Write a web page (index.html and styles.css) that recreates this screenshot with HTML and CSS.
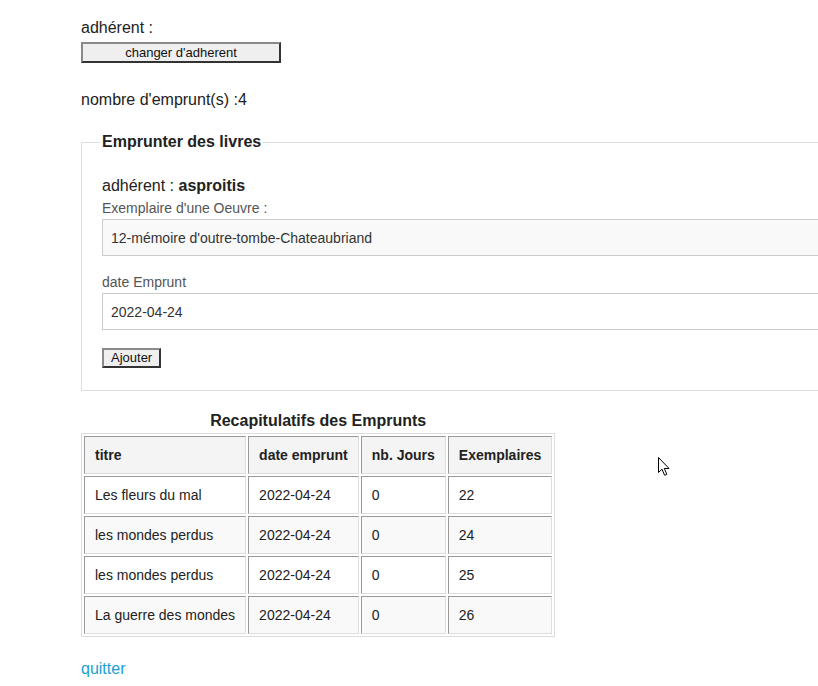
FILE: index.html
```html
<!DOCTYPE html>
<html lang="fr">
<head>
<meta charset="utf-8">
<title>Emprunts</title>
<link rel="stylesheet" href="styles.css">
</head>
<body>
<div class="page">
  <p class="line first">adhérent :</p>
  <button class="btn btn-wide" type="button">changer d'adherent</button>
  <p class="line count">nombre d'emprunt(s) :4</p>

  <form class="borrow">
    <fieldset class="box">
      <legend class="box-title">Emprunter des livres</legend>
      <p class="line member">adhérent : <strong>asproitis</strong></p>
      <label class="field-label" for="ex">Exemplaire d'une Oeuvre :</label>
      <div class="field field-grey" id="ex">12-mémoire d'outre-tombe-Chateaubriand</div>
      <label class="field-label gap" for="dt">date Emprunt</label>
      <div class="field" id="dt">2022-04-24</div>
      <button class="btn btn-small" type="button">Ajouter</button>
    </fieldset>
  </form>

  <table class="recap">
    <caption class="recap-title">Recapitulatifs des Emprunts</caption>
    <thead>
      <tr><th>titre</th><th>date emprunt</th><th>nb. Jours</th><th>Exemplaires</th></tr>
    </thead>
    <tbody>
      <tr><td>Les fleurs du mal</td><td>2022-04-24</td><td>0</td><td>22</td></tr>
      <tr class="alt"><td>les mondes perdus</td><td>2022-04-24</td><td>0</td><td>24</td></tr>
      <tr><td>les mondes perdus</td><td>2022-04-24</td><td>0</td><td>25</td></tr>
      <tr class="alt"><td>La guerre des mondes</td><td>2022-04-24</td><td>0</td><td>26</td></tr>
    </tbody>
  </table>

  <a class="quit" href="#">quitter</a>

  <svg class="cursor" width="12" height="20" viewBox="0 0 12 20" aria-hidden="true">
    <path d="M0.5 0.5 L0.5 15.5 L4 12.2 L6.6 18.3 L8.8 17.3 L6.3 11.5 L11 11.5 Z" fill="#fff" stroke="#000" stroke-width="1" stroke-linejoin="miter"/>
  </svg>
</div>
</body>
</html>
```
FILE: styles.css
```css
html, body {
  margin: 0;
  padding: 0;
  background: #fff;
}
body {
  font-family: "Liberation Sans", Arial, sans-serif;
  color: #222;
  overflow: hidden;
}
.page {
  position: relative;
  box-sizing: border-box;
  padding-left: 81px;
  width: 818px;
  height: 686px;
  overflow: hidden;
}
.line {
  margin: 0;
  font-size: 16px;
  line-height: 18px;
}
.first {
  padding-top: 19px;
}
.btn {
  display: block;
  margin: 0;
  font-family: "Liberation Sans", Arial, sans-serif;
  font-size: 13px;
  color: #111;
  background: #efefef;
  border-style: solid;
  border-width: 2px;
  border-color: #8a8a8a #333 #333 #8a8a8a;
  border-radius: 0;
  padding: 0;
}
.btn-wide {
  width: 200px;
  height: 21px;
  margin-top: 5px;
  line-height: 17px;
}
.btn-small {
  height: 20px;
  padding: 0 7px;
  line-height: 16px;
  margin-top: 18px;
}
.count {
  margin-top: 28px;
}
.borrow {
  margin: 24px 0 0 0;
}
.box {
  margin: 0;
  width: 900px;
  border: 1px solid #ddd;
  padding: 26px 20px 22px 20px;
  box-sizing: border-box;
}
.box-title {
  font-size: 16px;
  line-height: 18px;
  font-weight: bold;
  padding: 0 2px;
  margin-left: -2px;
}
.member strong {
  font-weight: bold;
}
.field-label {
  display: block;
  font-size: 14px;
  line-height: 16px;
  color: #555;
  margin-top: 5px;
}
.field-label.gap {
  margin-top: 18px;
}
.field {
  margin-top: 3px;
  height: 37px;
  box-sizing: border-box;
  border: 1px solid #ccc;
  background: #fff;
  padding: 1px 8px 0 8px;
  font-size: 14px;
  line-height: 35px;
  color: #333;
}
.field-grey {
  background: #f9f9f9;
}
.recap {
  margin-top: 21px;
  border: 1px solid #ddd;
  border-spacing: 2px;
  font-size: 14px;
}
.recap-title {
  font-size: 16px;
  line-height: 18px;
  font-weight: bold;
  padding-bottom: 3px;
}
.recap th,
.recap td {
  text-align: left;
  padding: 10px;
  line-height: 16px;
  border-style: solid;
  border-width: 1px;
  border-color: #999 #ddd #ddd #999;
  white-space: nowrap;
}
.recap th {
  background: #f4f4f4;
  font-weight: bold;
}
.recap tr.alt td {
  background: #f9f9f9;
}
.quit {
  display: inline-block;
  margin-top: 23px;
  font-size: 16px;
  line-height: 18px;
  color: #1a9fd4;
  text-decoration: none;
}
.cursor {
  position: absolute;
  left: 658px;
  top: 457px;
}
```
